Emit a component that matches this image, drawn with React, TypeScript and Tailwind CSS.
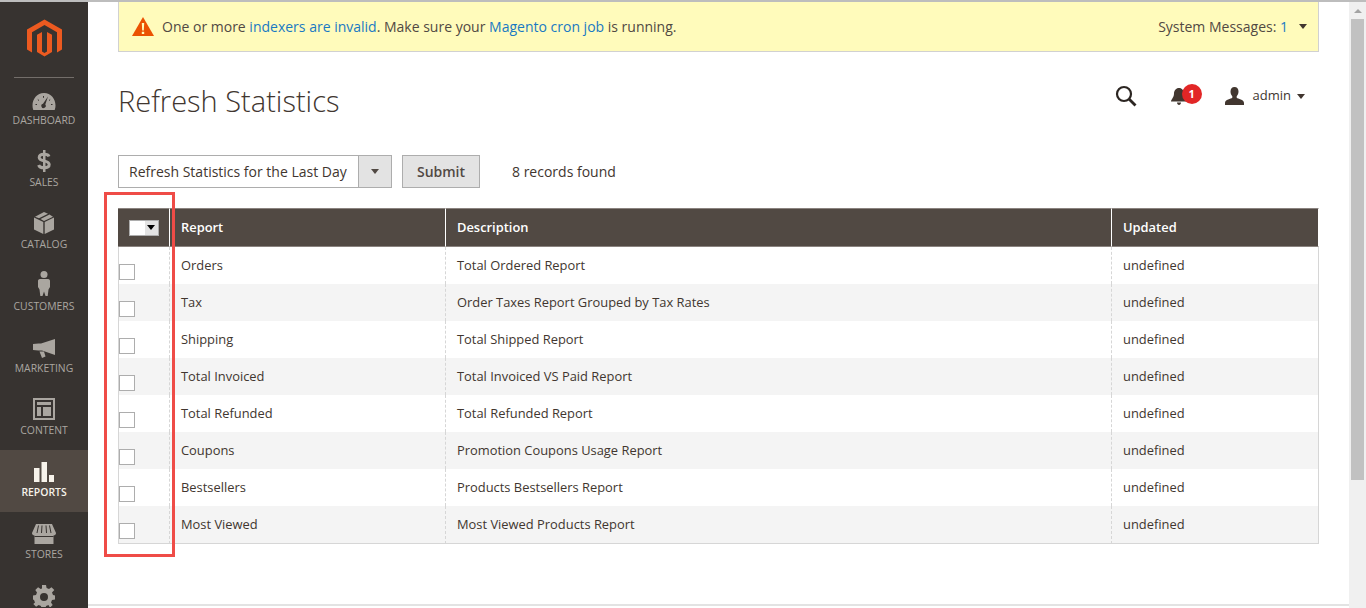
const navItems = [
  { label: "DASHBOARD", icon: "dashboard" },
  { label: "SALES", icon: "sales" },
  { label: "CATALOG", icon: "catalog" },
  { label: "CUSTOMERS", icon: "customers" },
  { label: "MARKETING", icon: "marketing" },
  { label: "CONTENT", icon: "content" },
  { label: "REPORTS", icon: "reports" },
  { label: "STORES", icon: "stores" },
];

const rows = [
  ["Orders", "Total Ordered Report"],
  ["Tax", "Order Taxes Report Grouped by Tax Rates"],
  ["Shipping", "Total Shipped Report"],
  ["Total Invoiced", "Total Invoiced VS Paid Report"],
  ["Total Refunded", "Total Refunded Report"],
  ["Coupons", "Promotion Coupons Usage Report"],
  ["Bestsellers", "Products Bestsellers Report"],
  ["Most Viewed", "Most Viewed Products Report"],
];

const NavIcon = ({ name }: { name: string }) => {
  switch (name) {
    case "dashboard":
      return (
        <svg width="24" height="17" viewBox="0 0 24 17" fill="currentColor">
          <path d="M12 0C5 0 .5 6 .5 12.500c0 1.700.2 3 .8 4.500h21.400c.6-1.500.8-2.800.8-4.500C23.500 6 19 0 12 0z" />
          <path d="M16 3.500 13.300 11.500a2.200 2.200 0 1 1-2.300-.8z" fill="#373330" />
          <path d="M3.500 11.500h1.500M5.800 6.500l1.200 1.100M11.500 3v1.800M18.200 6.500 17 7.600M19 11.500h1.500" stroke="#373330" strokeWidth="1" />
        </svg>
      );
    case "sales":
      return (
        <svg width="14" height="22" viewBox="0 0 14 22" fill="none" stroke="currentColor">
          <path d="M6 0h2.500v22H6z" fill="currentColor" stroke="none" />
          <path d="M12 6.500C11.500 5 9.500 4.200 7 4.200c-3 0-4.800 1.300-4.800 3.200 0 4.500 10 2.500 10 7.200 0 2-2 3.200-5 3.200-3 0-5-1-5.500-2.800" strokeWidth="3" />
        </svg>
      );
    case "catalog":
      return (
        <svg width="20" height="22" viewBox="0 0 20 22" fill="currentColor">
          <path d="M0 5.500 9.300 10v12L0 17.500z" />
          <path d="M20 5.500 10.700 10v12L20 17.500z" />
          <path d="M10 0 14 1.800 5 6.300 1 4.700z" />
          <path d="M15.500 2.500 19 4.700 10 9 6.500 7.100z" />
        </svg>
      );
    case "customers":
      return (
        <svg width="12" height="25" viewBox="0 0 12 25" fill="currentColor">
          <circle cx="6" cy="3.500" r="3.500" />
          <path d="M2 8h8c1.500 0 2 1 2 2v6l-1.500 2.500-.8 6.500H7.500L6 20.500 4.500 25H2.300l-.8-6.500L0 16v-6c0-1 .5-2 2-2z" />
        </svg>
      );
    case "marketing":
      return (
        <svg width="22" height="19" viewBox="0 0 22 19" fill="currentColor">
          <path d="M22 0v16L9 11.500H5.500L0 11V5l5.500-.5H8z" />
          <path d="M6.500 12.500h4.500l1.500 5-3.500 1.500z" />
        </svg>
      );
    case "content":
      return (
        <svg width="22" height="22" viewBox="0 0 22 22" fill="none">
          <rect x="1" y="1" width="20" height="20" stroke="currentColor" strokeWidth="2" />
          <path d="M4 4h14v3H4zM4 9h4v9H4zM10 9h8v9h-8z" fill="currentColor" />
        </svg>
      );
    case "reports":
      return (
        <svg width="20" height="20" viewBox="0 0 20 20" fill="currentColor">
          <path d="M0 6h5.500v14H0zM7.500 0H13v20H7.500zM15 13h5v7h-5z" />
        </svg>
      );
    case "stores":
      return (
        <svg width="24" height="20" viewBox="0 0 24 20" fill="currentColor">
          <path d="M4 0h16l4 9c0 1.500-1 2.500-2.500 2.500V20H2.500v-8.500C1 11.500 0 10.500 0 9z" />
          <path d="M6.500 1.500 5 9M10 1.500 9.500 9M14 1.500 14.500 9M17.500 1.500 19 9" stroke="#373330" strokeWidth="1" />
          <path d="M2.500 12.500h19" stroke="#373330" strokeWidth="1" />
        </svg>
      );
    default:
      return null;
  }
};

const Sidebar = () => (
  <aside className="w-[88px] shrink-0 bg-[#373330] overflow-hidden flex flex-col">
    <div className="h-[76px] shrink-0 mx-[14px] border-b border-[#736e6a] flex items-start justify-center pt-[17px]">
      <svg width="35" height="41" viewBox="0 0 35 40">
        <path
          fill="#ec5a20"
          d="M17.500 0 35 10v20l-5 2.900V12.800L17.500 5.600 5 12.800v20.100L0 30V10zM15 12.500l-5 2.800V32.500L17.500 37 25 32.500V15.300l-5-2.800V32l-2.500 1.500L15 32z"
        />
      </svg>
    </div>
    {navItems.map((item) => {
      const active = item.label === "REPORTS";
      return (
        <div
          key={item.label}
          className={`h-[62px] shrink-0 flex flex-col items-center justify-end pb-[13px] ${active ? "bg-[#514943] text-[#f7f3eb]" : "text-[#aaa6a0]"}`}
        >
          <div className="h-[28px] flex items-end justify-center">
            <NavIcon name={item.icon} />
          </div>
          <span className={`mt-[3px] text-[10.4px] leading-[14px] ${active ? "font-semibold" : ""}`}>{item.label}</span>
        </div>
      );
    })}
    <div className="shrink-0 flex justify-center pt-[11px] text-[#aaa6a0]">
      <svg width="22" height="22" viewBox="0 0 22 22" fill="currentColor">
        <path
          fillRule="evenodd"
          d="M9 0h4l.6 3 2.400 1 2.500-1.700 2.800 2.800L19 7.600l1 2.400 2 .5v4l-3 .5-1 2.400 1.700 2.500-2.800 2.800L15.500 20l-2.500 1-.5 3h-4l-.5-3-2.400-1-2.500 1.700-2.800-2.800L2 17.400 1 15l-1-.5v-4l3-.5 1-2.400L2.300 5.100l2.800-2.800L7.600 4 9 3.500zM11 8a4 4 0 1 0 0 8 4 4 0 0 0 0-8z"
        />
      </svg>
    </div>
  </aside>
);

const Notice = () => (
  <div className="h-[50px] bg-[#fffbbb] border-x border-b border-[#d1d1d1] flex items-center justify-between pl-[13px] pr-[11px] text-[14px] text-[#514943]">
    <div className="flex items-center">
      <svg width="22" height="20" viewBox="0 0 22 20" className="mr-[8px]">
        <path d="M11 0 22 19H0z" fill="#eb5202" />
        <path d="M9.800 6h2.400l-.4 7.500h-1.600zM9.800 14.800h2.400V17H9.800z" fill="#fffbbb" />
      </svg>
      <span>
        One or more <span className="text-[#1979c3]">indexers are invalid</span>. Make sure your{" "}
        <span className="text-[#1979c3]">Magento cron job</span> is running.
      </span>
    </div>
    <div className="flex items-center">
      <span>
        System Messages: <span className="text-[#1979c3]">1</span>
      </span>
      <span className="ml-[11px] w-0 h-0 border-x-[4px] border-x-transparent border-t-[5px] border-t-[#41362f]" />
    </div>
  </div>
);

const Header = () => (
  <div className="h-[103px] flex items-center justify-between">
    <h1 className="text-[29px] font-light text-[#41362f] leading-[36px] -mt-[5px]">Refresh Statistics</h1>
    <div className="flex items-center -mt-[15px] pr-[14px] text-[#41362f]">
      <svg width="22" height="22" viewBox="0 0 22 22" fill="none" stroke="#2c2622">
        <circle cx="9" cy="9" r="7" strokeWidth="2.200" />
        <path d="M14 14l6.500 6.500" strokeWidth="2.800" />
      </svg>
      <div className="relative ml-[34px] mr-[38px]">
        <svg width="16" height="18" viewBox="0 0 16 18" fill="#41362f" className="block">
          <path d="M8 1c3 0 5 2.500 5 5.500 0 4 3 6 3 8H0c0-2 3-4 3-8C3 3.500 5 1 8 1zM6 15.500h4c0 1.500-1 2.500-2 2.500s-2-1-2-2.500z" />
        </svg>
        <span className="absolute -top-[3px] left-[11px] w-[20px] h-[20px] rounded-full bg-[#e22626] text-white text-[11px] font-bold flex items-center justify-center">
          1
        </span>
      </div>
      <svg width="19" height="18" viewBox="0 0 19 18" fill="#41362f">
        <path d="M9.500 0c2.600 0 4 2 4 4.500 0 2-.8 3.700-1.800 4.700v1.600c1.200 1.200 7.300 1.700 7.300 5.200V18H0v-2c0-3.500 6.100-4 7.300-5.200V9.200C6.300 8.200 5.500 6.500 5.500 4.500 5.500 2 6.900 0 9.500 0z" />
      </svg>
      <span className="ml-[9px] text-[13px]">admin</span>
      <span className="ml-[6px] w-0 h-0 border-x-[4px] border-x-transparent border-t-[5px] border-t-[#41362f]" />
    </div>
  </div>
);

const Toolbar = () => (
  <div className="flex items-center text-[14px] text-[#41362f]">
    <div className="w-[274px] h-[33px] flex border border-[#adadad] bg-white">
      <div className="flex-1 flex items-center pl-[10px]">Refresh Statistics for the Last Day</div>
      <div className="w-[33px] bg-[#e3e3e3] border-l border-[#adadad] flex items-center justify-center">
        <span className="w-0 h-0 border-x-[4px] border-x-transparent border-t-[5px] border-t-[#514943]" />
      </div>
    </div>
    <button className="ml-[10px] w-[78px] h-[33px] bg-[#e3e3e3] border border-[#adadad] font-semibold text-[#514943]">
      Submit
    </button>
    <span className="ml-[32px]">8 records found</span>
  </div>
);

const Table = () => (
  <table className="mt-[20px] w-[1201px] table-fixed border-separate border-spacing-0 text-[12.9px] text-[#41362f]">
    <colgroup>
      <col className="w-[52px]" />
      <col className="w-[276px]" />
      <col className="w-[666px]" />
      <col />
    </colgroup>
    <thead>
      <tr className="h-[39px] bg-[#514943] text-white">
        <th className="border-y border-[#8a837f] border-r-white border-r p-0">
          <div className="flex justify-center">
            <div className="w-[30px] h-[16px] flex border border-[#adadad]">
              <span className="w-[15px] bg-white" />
              <span className="flex-1 bg-[#e3e3e3] flex items-center justify-center">
                <span className="w-0 h-0 border-x-[4px] border-x-transparent border-t-[5px] border-t-black" />
              </span>
            </div>
          </div>
        </th>
        <th className="border-y border-[#8a837f] border-r-white border-r pl-[11px] text-left font-semibold">Report</th>
        <th className="border-y border-[#8a837f] border-r-white border-r pl-[11px] text-left font-semibold">Description</th>
        <th className="border-y border-[#8a837f] border-r-white border-r pl-[11px] text-left font-semibold">Updated</th>
      </tr>
    </thead>
    <tbody>
      {rows.map(([report, description], i) => {
        const last = i === rows.length - 1;
        const bottom = last ? "border-b border-b-[#d6d6d6]" : "";
        return (
          <tr key={report} className={`${last ? "h-[38px]" : "h-[37px]"} ${i % 2 === 1 ? "bg-[#f4f4f4]" : "bg-white"}`}>
            <td className={`border-l border-l-[#d6d6d6] border-r border-r-[#d6d6d6] [border-right-style:dashed] p-0 align-top ${bottom}`}>
              <span className="block w-[16px] h-[16px] border border-[#adadad] bg-white mt-[17px]" />
            </td>
            <td className={`border-r border-r-[#d6d6d6] [border-right-style:dashed] pl-[11px] ${bottom}`}>{report}</td>
            <td className={`border-r border-r-[#d6d6d6] [border-right-style:dashed] pl-[11px] ${bottom}`}>{description}</td>
            <td className={`border-r border-r-[#d6d6d6] pl-[11px] ${bottom}`}>undefined</td>
          </tr>
        );
      })}
    </tbody>
  </table>
);

const Scrollbar = () => (
  <div className="w-[17px] shrink-0 bg-[#f0f0f0] flex flex-col px-[2px]">
    <div className="h-[17px] flex items-center justify-center">
      <span className="w-0 h-0 border-x-[4px] border-x-transparent border-b-[4px] border-b-[#a3a3a3]" />
    </div>
    <div className="w-full h-[461px] bg-[#c1c1c1]" />
  </div>
);

export default function App() {
  return (
    <div className="relative h-[608px] w-[1366px] overflow-hidden bg-white flex flex-col font-['Open_Sans',sans-serif]">
      <div className="h-[2px] shrink-0 bg-[#bdbdbd]" />
      <div className="flex-1 min-h-0 flex">
        <Sidebar />
        <main className="flex-1 min-w-0 flex flex-col">
          <div className="flex-1 min-h-0 px-[30px]">
            <div className="w-[1201px]">
              <Notice />
              <Header />
              <Toolbar />
              <Table />
            </div>
          </div>
          <div className="h-[2px] shrink-0 mb-[2px] bg-[#e3e3e3]" />
        </main>
        <Scrollbar />
      </div>
      {/* red annotation box drawn over the checkbox column */}
      <div className="absolute left-[104px] top-[192px] w-[71px] h-[365px] border-[3px] border-[#ef4c47]" />
    </div>
  );
}
